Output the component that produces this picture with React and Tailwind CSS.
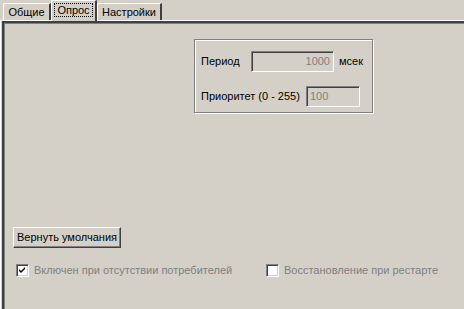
import React from "react";

const Field = ({ w, value, right }) => (
  <div
    className={`h-[21px] ${w} bg-[#d4d0c8] border border-t-[#808080] border-l-[#808080] border-b-white border-r-white shadow-[inset_1px_1px_0_#404040,inset_-1px_-1px_0_#d4d0c8] flex items-center px-[3px] text-[#808080] ${right ? "justify-end" : "justify-start"}`}
  >
    {value}
  </div>
);

const CheckBox = ({ checked, label, className }) => (
  <div className={`flex items-center gap-[5px] ${className}`}>
    <div className="w-[13px] h-[13px] bg-white border border-t-[#808080] border-l-[#808080] border-b-white border-r-white shadow-[inset_1px_1px_0_#404040,inset_-1px_-1px_0_#d4d0c8] flex items-center justify-center">
      {checked && (
        <svg width="7" height="7" viewBox="0 0 7 7">
          <path d="M0 2 L2 4 L6 0 L6 2 L2 6 L0 4 Z" fill="#000" />
        </svg>
      )}
    </div>
    <span className="text-[#808080]">{label}</span>
  </div>
);

export default function App() {
  return (
    <div
      className="w-[464px] h-[309px] bg-[#d4d0c8] overflow-hidden flex flex-col text-[11px] text-black leading-none"
      style={{ fontFamily: '"Liberation Sans", Arial, sans-serif' }}
    >
      {/* tabs */}
      <div className="h-[20px] flex items-end pl-[3px] relative z-10">
        <div className="w-[48px] h-[17px] border-t border-l border-white border-r-2 border-r-[#404040] rounded-tl-[2px] flex items-center justify-center">
          Общие
        </div>
        <div className="w-[46px] h-[21px] -mb-px bg-[#d4d0c8] border-t border-l border-white border-r-2 border-r-[#404040] rounded-tl-[2px] flex items-start justify-center pt-[2px]">
          <span className="border border-dotted border-black px-[2px] h-[14px] flex items-center">Опрос</span>
        </div>
        <div className="w-[65px] h-[17px] border-t border-l border-white border-r-2 border-r-[#404040] rounded-tl-[2px] flex items-center justify-center">
          Настройки
        </div>
      </div>

      {/* page */}
      <div className="flex-1 border-t border-l border-white">
        <div className="h-full border-t-2 border-l-2 border-[#404040] ml-px">
          <div className="h-full border-t border-l border-[#808080] flex flex-col">
            {/* group box */}
            <div className="ml-[189px] mt-[15px] w-[179px] h-[74px] border border-[#808080] shadow-[inset_1px_1px_0_#fff,1px_1px_0_#fff] flex flex-col pl-[6px]">
              <div className="mt-[11px] flex items-center">
                <span className="w-[50px]">Период</span>
                <Field w="w-[83px]" value="1000" right />
                <span className="ml-[5px]">мсек</span>
              </div>
              <div className="mt-[14px] flex items-center">
                <span className="w-[105px]">Приоритет (0 - 255)</span>
                <Field w="w-[54px]" value="100" />
              </div>
            </div>

            {/* button */}
            <div className="ml-[8px] mt-[114px] w-[108px] h-[21px] border border-t-white border-l-white border-b-[#404040] border-r-[#404040] shadow-[inset_-1px_-1px_0_#808080] flex items-center justify-center">
              Вернуть умолчания
            </div>

            {/* checkboxes */}
            <div className="mt-[16px] flex items-center">
              <CheckBox checked label="Включен при отсутствии потребителей" className="ml-[11px] w-[250px]" />
              <CheckBox label="Восстановление при рестарте" className="" />
            </div>
          </div>
        </div>
      </div>
    </div>
  );
}
